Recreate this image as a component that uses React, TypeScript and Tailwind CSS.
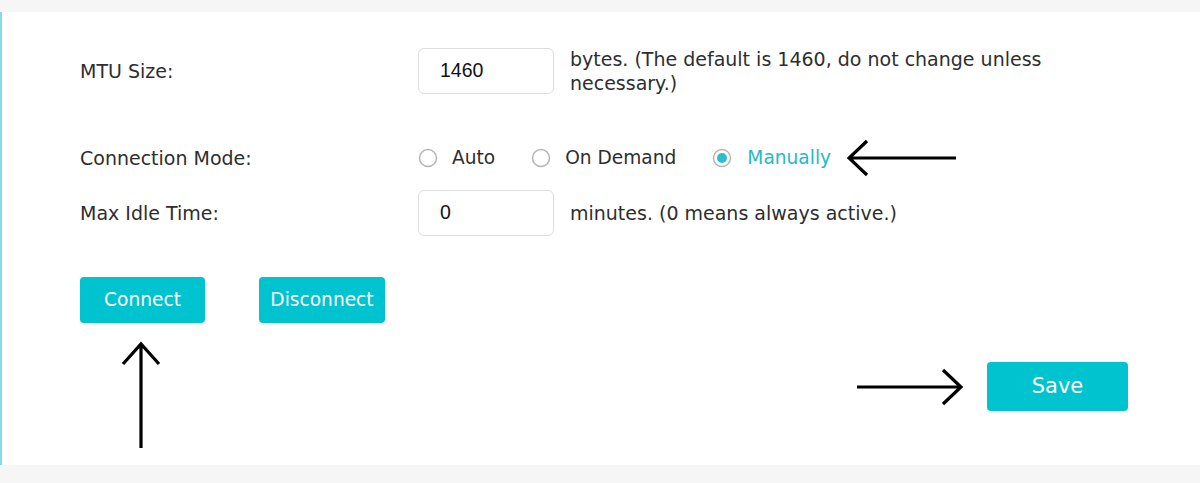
import React from "react";

const font = { fontFamily: '"DejaVu Sans", Verdana, sans-serif' };

function Radio({ checked }: { checked?: boolean }) {
  return (
    <svg width="20" height="20" viewBox="0 0 20 20" className="shrink-0">
      <circle cx="10" cy="10" r="8.5" fill="#fff" stroke="#b5b5b5" strokeWidth="1.5" />
      {checked && <circle cx="10" cy="10" r="5" fill="#2bbfcc" />}
    </svg>
  );
}

function TextBox({ value }: { value: string }) {
  return (
    <div className="flex h-[46px] w-[136px] shrink-0 items-center rounded-[6px] border border-[#dedede] bg-white pl-[21px] text-[19.5px] text-[#111]" style={{ fontFamily: '"Liberation Sans", Arial, sans-serif' }}>
      {value}
    </div>
  );
}

export default function App() {
  return (
    <div className="flex h-[483px] w-[1200px] flex-col bg-[#f6f6f6] pt-[12px] pb-[18px]" style={font}>
      <div className="flex flex-1 flex-col border-l-2 border-[#86dbe3] bg-white pl-[78px] pt-[35px] text-[19px] text-[#2e2e2e]">
        {/* MTU */}
        <div className="flex items-center">
          <div className="w-[338px]">MTU Size:</div>
          <TextBox value="1460" />
          <div className="ml-[16px] leading-[24px]">
            bytes. (The default is 1460, do not change unless
            <br />
            necessary.)
          </div>
        </div>

        {/* Connection mode */}
        <div className="mt-[51px] flex h-[24px] items-center">
          <div className="w-[338px]">Connection Mode:</div>
          <div className="flex items-center text-[18.6px]">
            <Radio />
            <span className="ml-[14px]">Auto</span>
            <span className="ml-[36px]">
              <Radio />
            </span>
            <span className="ml-[14px]">On Demand</span>
            <span className="ml-[36px]">
              <Radio checked />
            </span>
            <span className="ml-[15px] text-[#26b9c7]">Manually</span>
            <svg width="112" height="40" viewBox="0 0 112 40" className="ml-[16px]">
              <path d="M2 20 H109 M20 3 L2 20 L20 37" fill="none" stroke="#000" strokeWidth="3.2" />
            </svg>
          </div>
        </div>

        {/* Idle time */}
        <div className="mt-[20px] flex items-center">
          <div className="w-[338px]">Max Idle Time:</div>
          <TextBox value="0" />
          <div className="ml-[16px]">minutes. (0 means always active.)</div>
        </div>

        {/* Buttons */}
        <div className="mt-[41px] flex gap-[54px]">
          <button className="h-[46px] w-[125px] rounded-[4px] bg-[#00c3d0] text-[18.6px] text-white">Connect</button>
          <button className="h-[46px] w-[126px] rounded-[4px] bg-[#00c3d0] text-[18.6px] text-white">Disconnect</button>
        </div>

        <div className="flex justify-between pr-[72px]">
          <svg width="40" height="110" viewBox="0 0 40 110" className="ml-[41px] mt-[18px]">
            <path d="M20 3 V107 M2 23 L20 3 L38 23" fill="none" stroke="#000" strokeWidth="3.2" />
          </svg>
          <div className="mt-[39px] flex h-[49px] items-center">
            <svg width="110" height="40" viewBox="0 0 110 40">
              <path d="M2 20 H106 M88 3 L106 20 L88 37" fill="none" stroke="#000" strokeWidth="3.2" />
            </svg>
            <button className="ml-[22px] h-[49px] w-[141px] rounded-[4px] bg-[#00c3d0] text-[21px] text-white">Save</button>
          </div>
        </div>
      </div>
    </div>
  );
}
